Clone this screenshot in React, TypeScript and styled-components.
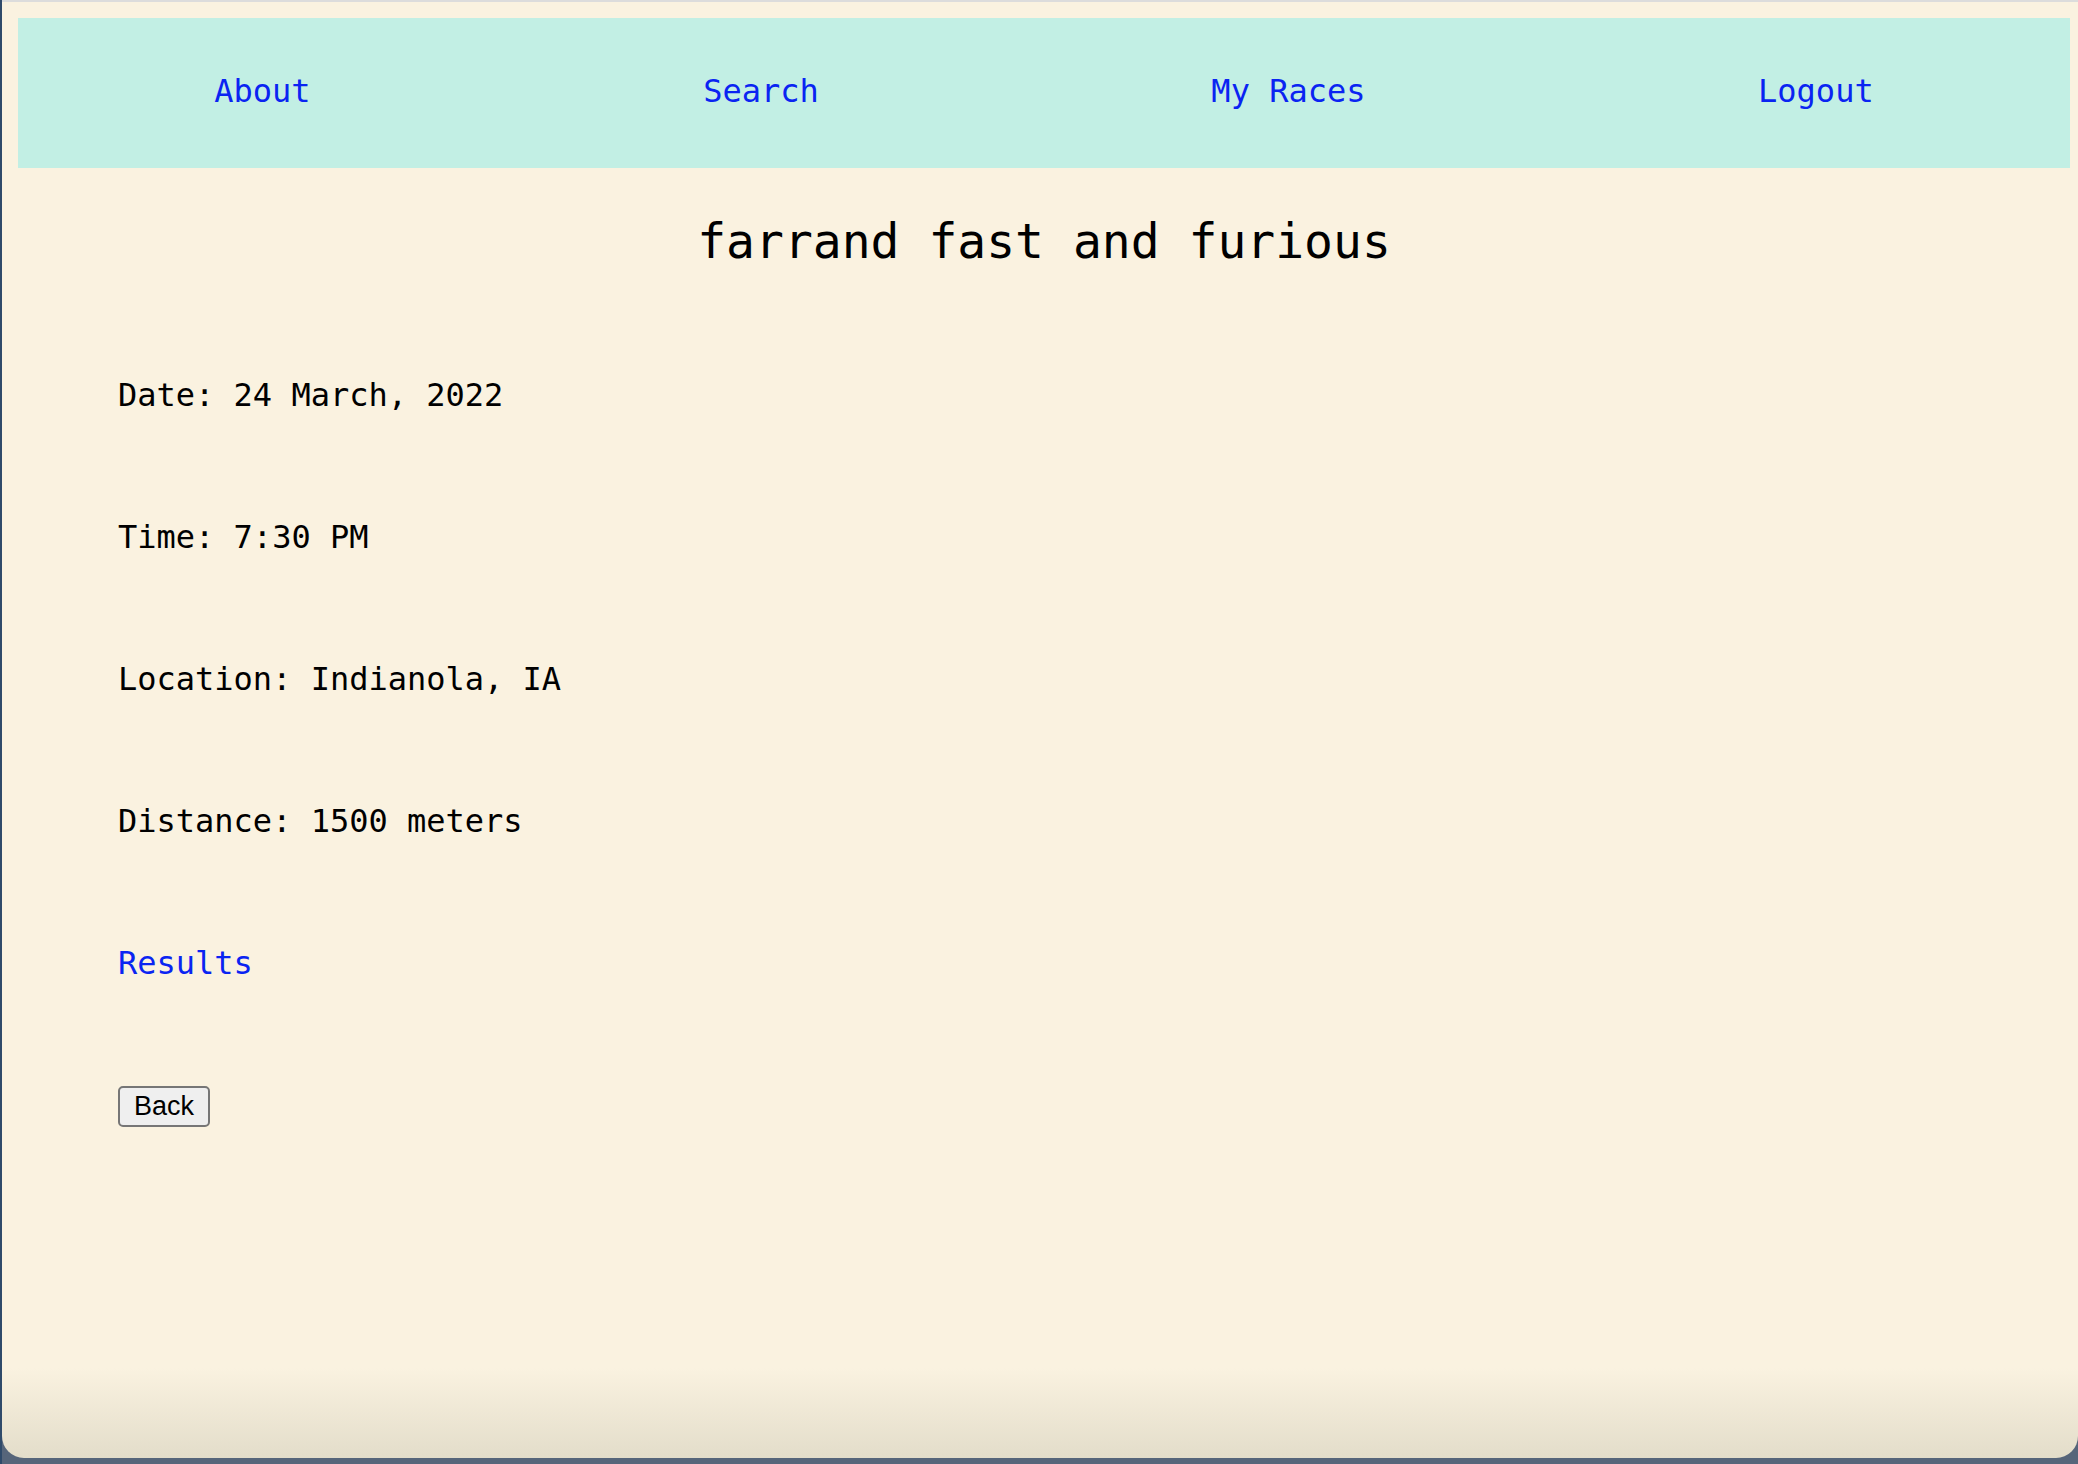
import styled, { createGlobalStyle } from 'styled-components'

const GlobalStyle = createGlobalStyle`
  html, body {
    margin: 0;
    padding: 0;
    background: #4b5a6e;
  }
  * {
    box-sizing: border-box;
  }
`

const mono = `"DejaVu Sans Mono", "Liberation Mono", monospace`

const race = {
  name: 'farrand fast and furious',
  date: '24 March, 2022',
  time: '7:30 PM',
  location: 'Indianola, IA',
  distance: '1500 meters',
}

const links = ['About', 'Search', 'My Races', 'Logout']

export default function App() {
  return (
    <>
      <GlobalStyle />
      <Desktop>
        <Window>
          <NavBar>
            {links.map((label) => (
              <NavLink href="#" key={label}>
                {label}
              </NavLink>
            ))}
          </NavBar>

          <Title>{race.name}</Title>

          <Details>
            <Line>Date: {race.date}</Line>
            <Line>Time: {race.time}</Line>
            <Line>Location: {race.location}</Line>
            <Line>Distance: {race.distance}</Line>
            <Line>
              <TextLink href="#">Results</TextLink>
            </Line>
          </Details>

          <BackRow>
            <BackButton type="button">Back</BackButton>
          </BackRow>
        </Window>
      </Desktop>
    </>
  )
}

const Desktop = styled.div`
  width: 2078px;
  height: 1464px;
  overflow: hidden;
  background: linear-gradient(to right, #2f4a6a 0, #2f4a6a 2px, #56657a 2px);
`

const Window = styled.div`
  margin-left: 2px;
  width: 2076px;
  height: 1458px;
  border-top: 2px solid #dcdcdc;
  border-radius: 0 0 22px 22px;
  padding: 16px 8px 0 16px;
  background: linear-gradient(
    to bottom,
    #faf2e0 0,
    #faf2e0 calc(100% - 90px),
    #e3ddca 100%
  );
  font-family: ${mono};
  color: #000;
`

const NavBar = styled.nav`
  display: flex;
  justify-content: space-around;
  align-items: center;
  background: #c2efe4;
  padding: 52px 0 56px;
`

const NavLink = styled.a`
  font-size: 32px;
  line-height: 42px;
  color: #0a24f2;
  text-decoration: none;
`

const Title = styled.h2`
  margin: 45px 0 0;
  text-align: center;
  font-size: 48px;
  line-height: 56px;
  font-weight: normal;
`

const Details = styled.div`
  display: flex;
  flex-direction: column;
  gap: 100px;
  margin-top: 105px;
  padding-left: 100px;
`

const Line = styled.p`
  margin: 0;
  font-size: 32px;
  line-height: 42px;
`

const TextLink = styled.a`
  color: #0a24f2;
  text-decoration: none;
`

const BackRow = styled.div`
  margin-top: 102px;
  padding-left: 100px;
`

const BackButton = styled.button`
  height: 41px;
  padding: 0 14px;
  border: 2px solid #767676;
  border-radius: 5px;
  background: #efefef;
  font-family: "Liberation Sans", Arial, sans-serif;
  font-size: 27px;
  color: #000;
`
